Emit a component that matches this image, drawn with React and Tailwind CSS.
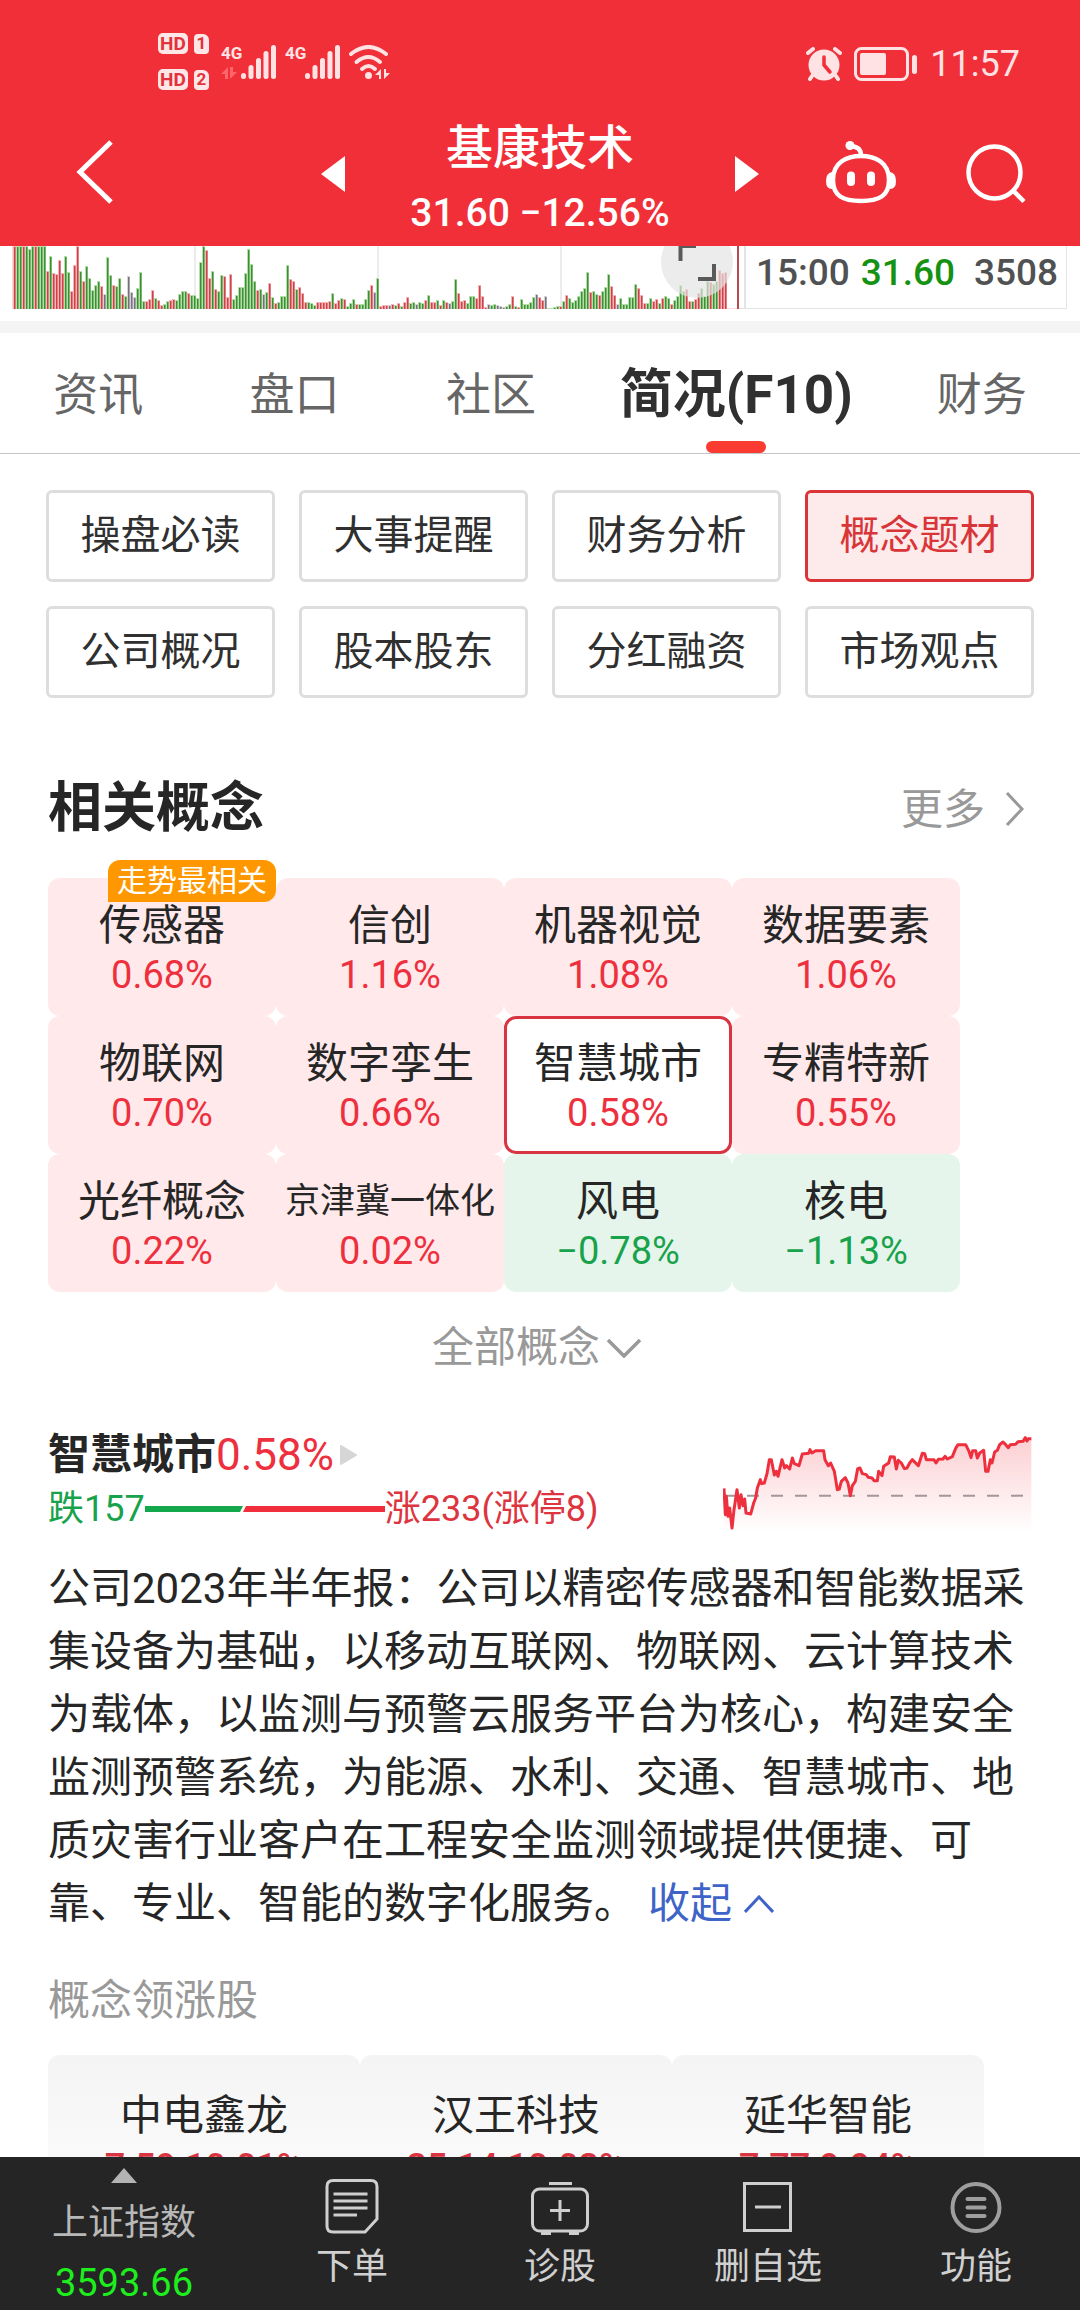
import React, { useState } from 'react';

const TABS = ['资讯', '盘口', '社区', '简况(F10)', '财务'];

const SECTIONS = [
  '操盘必读', '大事提醒', '财务分析', '概念题材',
  '公司概况', '股本股东', '分红融资', '市场观点',
];

const CONCEPTS = [
  { name: '传感器', change: 0.68, badge: '走势最相关' },
  { name: '信创', change: 1.16 },
  { name: '机器视觉', change: 1.08 },
  { name: '数据要素', change: 1.06 },
  { name: '物联网', change: 0.7 },
  { name: '数字孪生', change: 0.66 },
  { name: '智慧城市', change: 0.58 },
  { name: '专精特新', change: 0.55 },
  { name: '光纤概念', change: 0.22 },
  { name: '京津冀一体化', change: 0.02 },
  { name: '风电', change: -0.78 },
  { name: '核电', change: -1.13 },
];

const LEADERS = [
  { name: '中电鑫龙', price: '7.59', change: '10.01%' },
  { name: '汉王科技', price: '25.14', change: '10.02%' },
  { name: '延华智能', price: '7.77', change: '9.94%' },
];

// one entry per minute: g = down, r = up, k = flat, followed by the bar height
const VOLUME = (
  'r63 g63 g63 r63 g63 g60 g63 r63 g63 g63 g63 r38 g53 r36 r35 r49 r36 g53 g37 r18 r44 r63 g38 r28 g43 g31 g19 g24 g28 r23 ' +
  'k15 g52 g34 r24 g23 g31 r15 g13 k33 k17 k12 g21 g37 g8 r8 r10 r19 g11 r9 r4 g5 g8 r9 r10 g9 g15 g18 g18 r16 g14 ' +
  'g14 g11 g47 g63 r59 r31 g38 r20 g18 g34 r33 r12 r35 g10 g14 g22 g22 g36 g60 g45 g28 r19 g20 k15 g17 r26 g12 r6 g7 g13 ' +
  'g13 g44 r30 r28 g20 r22 r16 r7 g7 g6 g4 r7 r7 r7 r7 r8 g16 r6 r9 g11 r10 g3 g6 g10 r5 g5 g5 g10 g19 r24 ' +
  'k17 g31 r3 r4 r4 k4 r5 g4 r6 g3 r7 r12 g6 g7 k5 g7 g6 r9 g14 r7 r7 g9 r4 g9 r7 k6 g8 g30 r16 r8 ' +
  'r9 g6 g13 g13 r11 r24 r13 r2 k5 g4 g5 k4 k3 k2 g3 g5 r13 g3 r2 g10 g5 g5 g7 g12 k15 r12 r9 k13 g1 g1 ' +
  'g2 g3 r3 g8 r14 g11 g7 g9 g13 g18 g21 g37 r17 g18 g15 r14 g18 g22 g35 r23 r14 k5 g11 g5 g5 g12 g12 g25 r21 r14 ' +
  'r6 g6 g11 r8 r10 g6 r11 g13 g11 r5 g9 g13 g24 g18 r20 r8 g8 r10 r16 g21 g13 g28 r27 g25 g28 r39 r36 r37'
).split(' ');

const VOLUME_COLORS = { r: '#cb4347', g: '#3d8f35', k: '#75717a' };
const VOLUME_TINTS = { r: '#f6b5b8', g: '#b4dfa8', k: '#d5d3d8' };

const TREND =
  '133,266 137,345 140,290 145,350 150,325 157,385 163,330 172,270 179,325 184,285 190,318 195,298 199,340 213,343 ' +
  '222,310 228,295 233,265 242,240 246,252 254,250 262,222 269,180 275,180 284,226 290,215 295,230 307,180 315,205 ' +
  '320,198 330,208 338,175 344,192 358,198 368,163 387,161 391,150 397,160 408,153 432,153 436,180 446,198 453,190 ' +
  '464,215 473,270 479,268 485,245 497,234 505,250 512,288 518,258 527,245 534,207 541,205 548,222 560,225 566,233 ' +
  '577,235 583,243 593,243 597,215 607,228 612,200 627,190 632,171 644,172 650,208 656,182 665,190 674,207 682,205 ' +
  '690,190 698,180 706,188 716,198 728,161 735,162 740,180 763,180 769,190 776,179 790,178 796,170 803,178 818,171 ' +
  '828,146 835,135 858,135 868,155 874,174 879,153 888,153 893,175 900,160 912,152 918,215 925,215 932,180 937,190 ' +
  '945,157 953,152 960,135 970,127 978,135 986,144 992,135 1008,134 1015,126 1030,125 1037,114 1042,124 1046,117 1055,117';

const SignalBars = () => (
  <svg viewBox="0 0 36 34" className="h-[34px] w-9" fill="currentColor" aria-hidden="true">
    <rect x="0" y="28" width="5" height="6" rx="2.5" />
    <rect x="7.5" y="20" width="5" height="14" rx="2.5" />
    <rect x="15" y="13" width="5" height="21" rx="2.5" />
    <rect x="22.5" y="6" width="5" height="28" rx="2.5" />
    <rect x="30" y="0" width="5" height="34" rx="2.5" />
  </svg>
);

const DataArrows = ({ className }) => (
  <svg viewBox="0 0 16 12" className={className} fill="currentColor" aria-hidden="true">
    <path d="M7 0v12H4V7H0zM9 12V0h3v5h4z" />
  </svg>
);

const SimBadge = ({ number }) => (
  <div className="flex items-center gap-1.5 text-[#e2323b]">
    <span className="flex h-[21px] w-[30px] items-center justify-center rounded-[5px] bg-[#ffe6e7] text-[19px] leading-none font-bold">HD</span>
    <span className="flex h-5 w-[15px] items-center justify-center rounded-sm rounded-tr-md bg-[#ffe6e7] text-[17px] leading-none font-bold">{number}</span>
  </div>
);

const StatusBar = () => (
  <div className="flex h-[108px] items-start justify-between pr-[60px] pl-[158px] text-[#ffe3e4]">
    <div className="flex">
      <div className="mt-[33px] flex flex-col gap-[15px]">
        <SimBadge number="1" />
        <SimBadge number="2" />
      </div>
      <div className="mt-[45px] ml-3 flex">
        <div className="flex w-5 flex-col gap-1.5">
          <span className="text-[17px] leading-4 font-bold">4G</span>
          <DataArrows className="h-3 w-4 text-[#ff666c]" />
        </div>
        <SignalBars />
      </div>
      <div className="mt-[45px] ml-2 flex">
        <span className="w-5 text-[17px] leading-4 font-bold">4G</span>
        <SignalBars />
      </div>
      <svg viewBox="0 0 41 34" className="mt-[45px] ml-2 h-[34px] w-[41px]" fill="none" stroke="currentColor" strokeWidth="4" strokeLinecap="round" aria-hidden="true">
        <path d="M2 9Q19.500-5 37 9" />
        <path d="M7.500 17Q19.500 7 31 17" />
        <path d="M13 24Q19.500 18 26 24" />
        <circle cx="19.500" cy="30.500" r="3.500" fill="currentColor" stroke="none" />
        <path d="M32 24v10h-2v-4h-4zM35 34V24h2v4h4z" fill="currentColor" stroke="none" />
      </svg>
    </div>
    <div className="mt-[45px] flex items-center">
      <svg viewBox="0 0 36 34" className="h-[34px] w-9" fill="none" stroke="currentColor" aria-hidden="true">
        <circle cx="18" cy="18" r="15.500" fill="currentColor" stroke="none" />
        <path d="M2 6l5-4M34 6l-5-4M6 29l-2 3M30 29l2 3" strokeWidth="4" strokeLinecap="round" />
        <path d="M18 10v8l6 7" stroke="#f12f38" strokeWidth="3.500" strokeLinecap="round" />
      </svg>
      <svg viewBox="0 0 64 34" className="ml-3 h-[34px] w-16" fill="currentColor" aria-hidden="true">
        <rect x="1.500" y="1.500" width="52" height="31" rx="6" fill="none" stroke="currentColor" strokeWidth="3" />
        <rect x="6" y="6" width="26" height="22" rx="2" />
        <rect x="58" y="8" width="5" height="19" rx="2.500" />
      </svg>
      <span className="ml-3 text-[36px] leading-[38px]">11:57</span>
    </div>
  </div>
);

const Header = () => (
  <header className="shrink-0 bg-[#f12f38] text-white">
    <StatusBar />
    <div className="grid h-[138px] grid-cols-[1fr_438px_1fr]">
      <div className="flex items-start pt-8 pl-[76px]">
        <button type="button" aria-label="返回">
          <svg viewBox="0 0 38 64" className="h-16 w-[38px]" fill="none" stroke="currentColor" strokeWidth="5">
            <path d="M35 2L4 32l31 30" />
          </svg>
        </button>
      </div>
      <div className="flex items-start justify-between">
        <button type="button" aria-label="上一只" className="mt-12">
          <svg viewBox="0 0 24 36" className="h-9 w-6" fill="currentColor"><path d="M24 0v36L0 18z" /></svg>
        </button>
        <div className="flex flex-col items-center whitespace-nowrap">
          <h1 className="pt-2 text-[47px] leading-[64px] font-medium">基康技术</h1>
          <p className="text-[39px] leading-[66px] font-medium">31.60 −12.56%</p>
        </div>
        <button type="button" aria-label="下一只" className="mt-12">
          <svg viewBox="0 0 24 36" className="h-9 w-6" fill="currentColor"><path d="M0 0v36l24-18z" /></svg>
        </button>
      </div>
      <div className="flex items-start justify-between pt-8 pr-[54px] pl-[67px]">
        <button type="button" aria-label="智能助手">
          <svg viewBox="0 0 70 64" className="h-16 w-[70px]" fill="none" stroke="currentColor" strokeWidth="4.500">
            <path d="M35 16c14 0 28 6 28 24 0 16-10 21-28 21S7 56 7 40c0-18 14-24 28-24z" />
            <path d="M35 16c0-7-3-9-10-10" />
            <circle cx="24" cy="5.500" r="4.500" fill="currentColor" stroke="none" />
            <path d="M6 32q-6 1-6 9t6 8zM64 32q6 1 6 9t-6 8z" fill="currentColor" stroke="none" />
            <path d="M25 35.500v6.500M45 35.500v6.500" strokeWidth="8" strokeLinecap="round" />
          </svg>
        </button>
        <button type="button" aria-label="搜索">
          <svg viewBox="0 0 60 64" className="h-16 w-[60px]" fill="none" stroke="currentColor" strokeWidth="4.500">
            <circle cx="28.500" cy="32.500" r="26" />
            <path d="M47 50.500L58 61.500" />
          </svg>
        </button>
      </div>
    </div>
  </header>
);

const VolumeStrip = () => (
  <section className="relative flex h-[75px] overflow-hidden pr-[13px] pl-3">
    <svg viewBox="0 0 732 63" preserveAspectRatio="none" className="h-[63px] min-w-0 flex-1" aria-label="成交量">
      <path d="M183 0v63M366 0v63M549 0v63" stroke="#ececec" strokeWidth="2" />
      <path d="M0 62.500h732M.500 0v63" stroke="#f3dcdc" />
      {VOLUME.map((bar, i) => {
        const height = Number(bar.slice(1));
        return (
          <g key={i}>
            <rect x={1 + i * 3} y={63 - height} width="3" height={height} fill={VOLUME_TINTS[bar[0]]} />
            <rect x={2 + i * 3} y={64 - height} width="1.500" height={height} fill={VOLUME_COLORS[bar[0]]} />
          </g>
        );
      })}
      <path d="M726 0v63" stroke="#b5494f" strokeWidth="2" />
    </svg>
    <div className="flex h-[63px] w-[323px] shrink-0 items-start justify-between border-r border-b border-l-2 border-[#e4e4e4] pt-1 pr-2 pl-2.5 text-[37px] leading-[46px] font-medium text-[#505152]">
      <span>15:00</span>
      <span className="mr-2 text-[#159212]">31.60</span>
      <span>3508</span>
    </div>
    <button type="button" aria-label="全屏" className="absolute -top-5 right-[347px] size-[72px] rounded-full bg-[#e4e4e4]/70">
      <svg viewBox="0 0 72 72" className="size-[72px]" fill="none" stroke="#5a5a5a" strokeWidth="4">
        <path d="M19.500 35V20H35M53 38v15H37" />
      </svg>
    </button>
  </section>
);

const Tabs = () => {
  const [active, setActive] = useState('简况(F10)');

  return (
    <nav className="flex border-t-[12px] border-b border-t-[#f4f4f4] border-b-[#c4c4c4]">
      {TABS.map((tab) => (
        <button
          key={tab}
          type="button"
          onClick={() => setActive(tab)}
          className={
            tab === active
              ? 'relative h-[120px] flex-[3] pt-1 text-[53px] leading-[60px] font-bold whitespace-nowrap text-[#303030]'
              : 'h-[120px] flex-[2] pt-1.5 text-[45px] leading-[60px] whitespace-nowrap text-[#666]'
          }
        >
          {tab}
          {tab === active && (
            <span className="absolute bottom-0 left-1/2 h-3 w-[60px] -translate-x-1/2 rounded-full bg-[#f93b31]" />
          )}
        </button>
      ))}
    </nav>
  );
};

const SectionButtons = () => {
  const [active, setActive] = useState('概念题材');

  return (
    <div className="grid grid-cols-4 gap-6 px-[46px] pt-9">
      {SECTIONS.map((label) => (
        <button
          key={label}
          type="button"
          onClick={() => setActive(label)}
          className={
            label === active
              ? 'h-[92px] rounded-md border-3 border-[#d93438] bg-[#fdeaea] text-[40px] leading-none text-[#d93438]'
              : 'h-[92px] rounded-md border-3 border-[#dcdddd] bg-white text-[40px] leading-none text-[#303030]'
          }
        >
          {label}
        </button>
      ))}
    </div>
  );
};

const formatChange = (value) => `${value < 0 ? '−' : ''}${Math.abs(value).toFixed(2)}%`;

const ConceptCell = ({ concept, selected, onSelect }) => {
  let tone = 'border-transparent bg-[#ffe9ea]';
  if (selected) tone = 'border-[#d93442] bg-white';
  else if (concept.change < 0) tone = 'border-transparent bg-[#e5f5eb]';

  return (
    <button type="button" onClick={onSelect} className={`relative h-[138px] rounded-xl border-3 pt-1.5 whitespace-nowrap ${tone}`}>
      {concept.badge && (
        <span className="absolute -top-[21px] -right-[3px] rounded-xl rounded-bl-none bg-[#ff9800] px-[9px] text-[30px] leading-[42px] text-white">
          {concept.badge}
        </span>
      )}
      <span className={`block leading-[50px] text-[#262626] ${concept.name.length > 5 ? 'text-[35px]' : 'text-[42px]'}`}>
        {concept.name}
      </span>
      <span className={`block text-[38px] leading-[48px] ${concept.change < 0 ? 'text-[#19a24c]' : 'text-[#ee2f3e]'}`}>
        {formatChange(concept.change)}
      </span>
    </button>
  );
};

const RelatedConcepts = ({ selected, onSelect }) => (
  <section className="px-12 pt-[78px]">
    <div className="flex h-[66px] items-center justify-between pr-[7px]">
      <h2 className="text-[54px] leading-[66px] font-bold text-[#262626]">相关概念</h2>
      <a href="#more" className="flex items-center gap-5 text-[42px] text-[#999]">
        更多
        <svg viewBox="0 0 20 34" className="h-[34px] w-5" fill="none" stroke="currentColor" strokeWidth="3">
          <path d="M2 1l15 16L2 33" />
        </svg>
      </a>
    </div>
    <div className="mt-9 mr-[72px] grid grid-cols-4">
      {CONCEPTS.map((concept) => (
        <ConceptCell
          key={concept.name}
          concept={concept}
          selected={concept.name === selected}
          onSelect={() => onSelect(concept.name)}
        />
      ))}
    </div>
    <button type="button" className="mx-auto mt-[26px] flex items-center gap-1.5 pr-1.5 text-[42px] leading-[60px] text-[#999]">
      全部概念
      <svg viewBox="0 0 36 20" className="h-5 w-9" fill="none" stroke="currentColor" strokeWidth="3.500">
        <path d="M2 2l16 16L34 2" />
      </svg>
    </button>
  </section>
);

const ConceptDetail = () => (
  <section className="px-12 pt-[47px]">
    <div className="flex items-start justify-between">
      <div>
        <div className="flex h-[60px] items-center">
          <h3 className="text-[42px] leading-[60px] font-bold text-[#262626]">智慧城市</h3>
          <span className="text-[44px] leading-[60px] text-[#ee2f3e]">0.58%</span>
          <svg viewBox="0 0 18 20" className="ml-1.5 h-5 w-[18px]" fill="#d6d6d6" stroke="#d6d6d6" strokeWidth="2" strokeLinejoin="round">
            <path d="M1 1v18l15-9z" />
          </svg>
        </div>
        <div className="flex h-12 items-center text-[36px] leading-[48px]">
          <span className="text-[#19a24c]">跌157</span>
          <svg viewBox="0 0 240 6" className="h-1.5 w-60" aria-hidden="true">
            <path d="M0 0h98l-3 6H0z" fill="#12a84b" />
            <path d="M101 0h139v6H98z" fill="#f12f3c" />
          </svg>
          <span className="text-[#dd3540]">涨233(涨停8)</span>
        </div>
      </div>
      <svg viewBox="130 100 927 300" className="mt-2 h-[100px] w-[309px]" aria-label="分时走势">
        <defs>
          <linearGradient id="trend" x1="0" y1="0" x2="0" y2="1">
            <stop offset="0" stopColor="#f12f3c" stopOpacity="0.230" />
            <stop offset="1" stopColor="#f12f3c" stopOpacity="0" />
          </linearGradient>
        </defs>
        <polygon points={`${TREND} 1055,400 133,400`} fill="url(#trend)" />
        <path d="M130 288h925" stroke="#a3959a" strokeWidth="6" strokeDasharray="36 36" />
        <polyline points={TREND} fill="none" stroke="#ee2f3e" strokeWidth="9" strokeLinejoin="round" />
      </svg>
    </div>
    <p className="mt-6 text-[42px] leading-[63px] text-[#262626]">
      公司2023年半年报：公司以精密传感器和智能数据采集设备为基础，以移动互联网、物联网、云计算技术为载体，以监测与预警云服务平台为核心，构建安全监测预警系统，为能源、水利、交通、智慧城市、地质灾害行业客户在工程安全监测领域提供便捷、可靠、专业、智能的数字化服务。
      <button type="button" className="ml-3 inline-flex items-center gap-3 text-[#3f64c8]">
        收起
        <svg viewBox="0 0 30 18" className="h-[18px] w-[30px]" fill="none" stroke="currentColor" strokeWidth="3">
          <path d="M1 17L15 2l14 15" />
        </svg>
      </button>
    </p>
  </section>
);

const LeadingStocks = () => (
  <section className="px-12 pt-9">
    <h3 className="text-[42px] leading-[60px] text-[#999]">概念领涨股</h3>
    <div className="mt-6 mr-12 grid grid-cols-3">
      {LEADERS.map((stock) => (
        <a
          key={stock.name}
          href="#stock"
          className="block rounded-xl bg-linear-to-b from-[#f4f4f4] to-[#fdfdfd] pt-[30px] pb-6 text-center whitespace-nowrap"
        >
          <span className="block text-[42px] leading-[62px] text-[#262626]">{stock.name}</span>
          <span className="block text-[36px] leading-[40px] font-medium text-[#d93442]">
            {stock.price} {stock.change}
          </span>
        </a>
      ))}
    </div>
  </section>
);

const ACTIONS = [
  {
    label: '下单',
    icon: (
      <>
        <path d="M11 4.500h38q6 0 6 6V43L43 56H11q-6 0-6-6V10.500q0-6 6-6z" />
        <path d="M11.500 18h34M11.500 25h34M11.500 32h34M11.500 39h23.500" />
      </>
    ),
  },
  {
    label: '诊股',
    icon: (
      <>
        <rect x="2.500" y="13" width="55" height="42" rx="7" />
        <path d="M19 7.500h23M30 24v21M20 34.500h20" />
        <path d="M11 57h10M39 57h10" strokeWidth="4" />
      </>
    ),
  },
  {
    label: '删自选',
    icon: (
      <>
        <rect x="6.500" y="7.500" width="46" height="47" />
        <path d="M17 31h26" />
      </>
    ),
  },
  {
    label: '功能',
    icon: (
      <g stroke="#9e9e9e" strokeWidth="4">
        <circle cx="30" cy="31.500" r="23.500" />
        <path d="M21.500 23h17M21.500 31.500h17M21.500 40h17" strokeLinecap="round" />
      </g>
    ),
  },
];

const BottomBar = () => (
  <footer className="flex h-[153px] shrink-0 bg-[#252525] text-[36px] text-[#d0d0d0]">
    <button type="button" className="flex w-[248px] flex-col items-center pt-[11px] text-[#b8b8b8]">
      <svg viewBox="0 0 26 15" className="h-[15px] w-[26px]" fill="#b3b3b3" aria-hidden="true"><path d="M13 0l13 15H0z" /></svg>
      <span className="mt-3.5 leading-[52px]">上证指数</span>
      <span className="pt-2 text-[38px] leading-[52px] text-[#1eee1e]">3593.66</span>
    </button>
    {ACTIONS.map((action) => (
      <button key={action.label} type="button" className="flex flex-1 flex-col items-center pt-[19px]">
        <svg viewBox="0 0 60 60" className="size-[60px]" fill="none" stroke="#cfcfcf" strokeWidth="3" aria-hidden="true">
          {action.icon}
        </svg>
        <span className="mt-1 leading-[54px]">{action.label}</span>
      </button>
    ))}
  </footer>
);

const App = () => {
  const [selected, setSelected] = useState('智慧城市');

  return (
    <div className="flex h-screen flex-col bg-white font-['Roboto','Noto_Sans_CJK_SC',sans-serif]">
      <Header />
      <main className="min-h-0 flex-1 overflow-y-auto [scrollbar-width:none]">
        <VolumeStrip />
        <Tabs />
        <SectionButtons />
        <RelatedConcepts selected={selected} onSelect={setSelected} />
        <ConceptDetail />
        <LeadingStocks />
      </main>
      <BottomBar />
    </div>
  );
};

export default App;
